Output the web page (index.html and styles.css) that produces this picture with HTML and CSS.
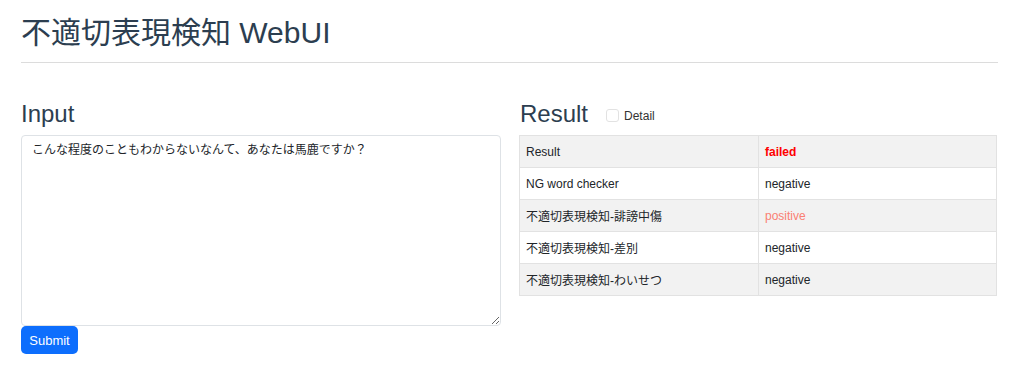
FILE: index.html
```html
<!DOCTYPE html>
<html lang="ja">
<head>
<meta charset="utf-8">
<title>不適切表現検知 WebUI</title>
<link rel="stylesheet" href="styles.css">
</head>
<body>
<div class="container">
  <h1 class="title">不適切表現検知 WebUI</h1>
  <hr class="divider">
  <div class="columns">
    <section class="col">
      <h2 class="heading">Input</h2>
      <textarea class="input">こんな程度のこともわからないなんて、あなたは馬鹿ですか？</textarea>
      <button class="submit" type="button">Submit</button>
    </section>
    <section class="col">
      <div class="result-head">
        <h2 class="heading">Result</h2>
        <label class="detail"><input type="checkbox" class="check"><span>Detail</span></label>
      </div>
      <table class="results">
        <tr class="odd"><td class="name">Result</td><td class="val failed">failed</td></tr>
        <tr><td class="name">NG word checker</td><td class="val">negative</td></tr>
        <tr class="odd"><td class="name">不適切表現検知-誹謗中傷</td><td class="val positive">positive</td></tr>
        <tr><td class="name">不適切表現検知-差別</td><td class="val">negative</td></tr>
        <tr class="odd"><td class="name">不適切表現検知-わいせつ</td><td class="val">negative</td></tr>
      </table>
    </section>
  </div>
</div>
</body>
</html>
```
FILE: styles.css
```css
* { box-sizing: border-box; }
html, body { margin: 0; padding: 0; background: #fff; }
body {
  font-family: "Liberation Sans", Arial, "Noto Sans CJK JP", sans-serif;
  color: #212529;
  font-size: 13px;
}
.container {
  padding: 0 26px 0 21px;
}
.title {
  margin: 0;
  padding-top: 15px;
  font-size: 30px;
  font-weight: 400;
  line-height: 36px;
  color: #2c3e50;
}
.divider {
  margin: 11px 0 0 0;
  border: 0;
  border-top: 1px solid #dcdcdc;
}
.columns {
  display: grid;
  grid-template-columns: 480px 478px;
  column-gap: 18px;
  margin-top: 36px;
}
.heading {
  margin: 0;
  font-size: 24px;
  font-weight: 400;
  line-height: 30px;
  color: #2c3e50;
}
.input {
  display: block;
  width: 480px;
  height: 191px;
  margin-top: 6px;
  padding: 5px 10px;
  border: 1px solid #dee2e6;
  border-radius: 4px;
  font-family: "Liberation Sans", Arial, "Noto Sans CJK JP", sans-serif;
  font-size: 12px;
  line-height: 18px;
  color: #212529;
  resize: vertical;
}
.submit {
  display: block;
  height: 28px;
  width: 57px;
  padding: 0;
  border: 0;
  border-radius: 5px;
  background: #0d6efd;
  color: #fff;
  font-family: "Liberation Sans", Arial, sans-serif;
  font-size: 13px;
}
.result-head {
  display: flex;
  align-items: center;
  gap: 18px;
  padding-left: 1px;
}
.detail {
  display: flex;
  align-items: center;
  gap: 5px;
  margin-top: 3px;
  font-size: 12px;
  color: #333;
}
.check {
  margin: 0;
  width: 13px;
  height: 13px;
  appearance: none;
  border: 1px solid #e2e2e2;
  border-radius: 3px;
  background: #fff;
}
.results {
  width: 478px;
  margin-top: 6px;
  border-collapse: collapse;
  border: 1px solid #e2e2e2;
  font-size: 12px;
}
.results td {
  height: 32px;
  padding: 0 6px;
  border: 1px solid #e2e2e2;
  color: #212529;
}
.results td.name { width: 239px; }
.results tr.odd td { background: #f2f2f2; }
.results td.failed { color: #ff0000; font-weight: 700; }
.results td.positive { color: #fa8072; }
```
